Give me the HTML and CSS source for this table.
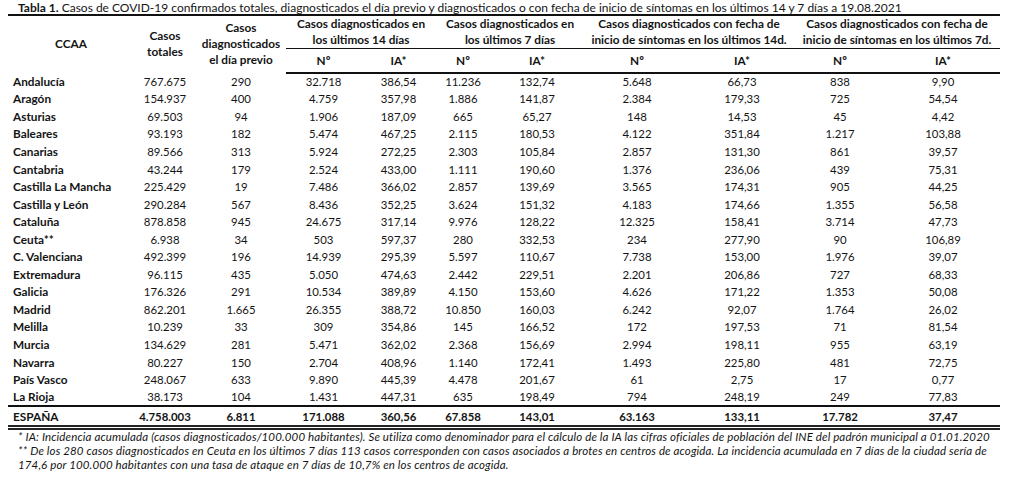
FILE: index.html
```html
<!DOCTYPE html>
<html lang="es">
<head>
<meta charset="utf-8">
<title>Tabla 1. Casos de COVID-19</title>
<link rel="stylesheet" href="styles.css">
</head>
<body>
<div class="page">
  <p class="caption"><b>Tabla 1.</b> Casos de COVID-19 confirmados totales, diagnosticados el día previo y diagnosticados o con fecha de inicio de síntomas en los últimos 14 y 7 días a 19.08.2021</p>
  <table class="data">
    <colgroup>
      <col class="c-ccaa"><col class="c-tot"><col class="c-prev">
      <col class="c-n14"><col class="c-ia14">
      <col class="c-n7"><col class="c-ia7">
      <col class="c-ns14"><col class="c-ias14">
      <col class="c-ns7"><col class="c-ias7">
    </colgroup>
    <thead>
      <tr class="grp-row">
        <th rowspan="2">CCAA</th>
        <th rowspan="2">Casos<br>totales</th>
        <th rowspan="2" class="stack">Casos<br>diagnosticados<br>el día previo</th>
        <th colspan="2" class="grp">Casos diagnosticados en<br>los últimos 14 días</th>
        <th colspan="2" class="grp">Casos diagnosticados en<br>los últimos 7 días</th>
        <th colspan="2" class="grp">Casos diagnosticados con fecha de<br>inicio de síntomas en los últimos 14d.</th>
        <th colspan="2" class="grp">Casos diagnosticados con fecha de<br>inicio de síntomas en los últimos 7d.</th>
      </tr>
      <tr class="sub-row">
        <th>Nº</th><th>IA*</th><th>Nº</th><th>IA*</th><th>Nº</th><th>IA*</th><th>Nº</th><th>IA*</th>
      </tr>
    </thead>
    <tbody>
      <tr><th>Andalucía</th><td>767.675</td><td>290</td><td>32.718</td><td>386,54</td><td>11.236</td><td>132,74</td><td>5.648</td><td>66,73</td><td>838</td><td>9,90</td></tr>
      <tr><th>Aragón</th><td>154.937</td><td>400</td><td>4.759</td><td>357,98</td><td>1.886</td><td>141,87</td><td>2.384</td><td>179,33</td><td>725</td><td>54,54</td></tr>
      <tr><th>Asturias</th><td>69.503</td><td>94</td><td>1.906</td><td>187,09</td><td>665</td><td>65,27</td><td>148</td><td>14,53</td><td>45</td><td>4,42</td></tr>
      <tr><th>Baleares</th><td>93.193</td><td>182</td><td>5.474</td><td>467,25</td><td>2.115</td><td>180,53</td><td>4.122</td><td>351,84</td><td>1.217</td><td>103,88</td></tr>
      <tr><th>Canarias</th><td>89.566</td><td>313</td><td>5.924</td><td>272,25</td><td>2.303</td><td>105,84</td><td>2.857</td><td>131,30</td><td>861</td><td>39,57</td></tr>
      <tr><th>Cantabria</th><td>43.244</td><td>179</td><td>2.524</td><td>433,00</td><td>1.111</td><td>190,60</td><td>1.376</td><td>236,06</td><td>439</td><td>75,31</td></tr>
      <tr><th>Castilla La Mancha</th><td>225.429</td><td>19</td><td>7.486</td><td>366,02</td><td>2.857</td><td>139,69</td><td>3.565</td><td>174,31</td><td>905</td><td>44,25</td></tr>
      <tr><th>Castilla y León</th><td>290.284</td><td>567</td><td>8.436</td><td>352,25</td><td>3.624</td><td>151,32</td><td>4.183</td><td>174,66</td><td>1.355</td><td>56,58</td></tr>
      <tr><th>Cataluña</th><td>878.858</td><td>945</td><td>24.675</td><td>317,14</td><td>9.976</td><td>128,22</td><td>12.325</td><td>158,41</td><td>3.714</td><td>47,73</td></tr>
      <tr><th>Ceuta**</th><td>6.938</td><td>34</td><td>503</td><td>597,37</td><td>280</td><td>332,53</td><td>234</td><td>277,90</td><td>90</td><td>106,89</td></tr>
      <tr><th>C. Valenciana</th><td>492.399</td><td>196</td><td>14.939</td><td>295,39</td><td>5.597</td><td>110,67</td><td>7.738</td><td>153,00</td><td>1.976</td><td>39,07</td></tr>
      <tr><th>Extremadura</th><td>96.115</td><td>435</td><td>5.050</td><td>474,63</td><td>2.442</td><td>229,51</td><td>2.201</td><td>206,86</td><td>727</td><td>68,33</td></tr>
      <tr><th>Galicia</th><td>176.326</td><td>291</td><td>10.534</td><td>389,89</td><td>4.150</td><td>153,60</td><td>4.626</td><td>171,22</td><td>1.353</td><td>50,08</td></tr>
      <tr><th>Madrid</th><td>862.201</td><td>1.665</td><td>26.355</td><td>388,72</td><td>10.850</td><td>160,03</td><td>6.242</td><td>92,07</td><td>1.764</td><td>26,02</td></tr>
      <tr><th>Melilla</th><td>10.239</td><td>33</td><td>309</td><td>354,86</td><td>145</td><td>166,52</td><td>172</td><td>197,53</td><td>71</td><td>81,54</td></tr>
      <tr><th>Murcia</th><td>134.629</td><td>281</td><td>5.471</td><td>362,02</td><td>2.368</td><td>156,69</td><td>2.994</td><td>198,11</td><td>955</td><td>63,19</td></tr>
      <tr><th>Navarra</th><td>80.227</td><td>150</td><td>2.704</td><td>408,96</td><td>1.140</td><td>172,41</td><td>1.493</td><td>225,80</td><td>481</td><td>72,75</td></tr>
      <tr><th>País Vasco</th><td>248.067</td><td>633</td><td>9.890</td><td>445,39</td><td>4.478</td><td>201,67</td><td>61</td><td>2,75</td><td>17</td><td>0,77</td></tr>
      <tr><th>La Rioja</th><td>38.173</td><td>104</td><td>1.431</td><td>447,31</td><td>635</td><td>198,49</td><td>794</td><td>248,19</td><td>249</td><td>77,83</td></tr>
    </tbody>
    <tfoot>
      <tr><th>ESPAÑA</th><td>4.758.003</td><td>6.811</td><td>171.088</td><td>360,56</td><td>67.858</td><td>143,01</td><td>63.163</td><td>133,11</td><td>17.782</td><td>37,47</td></tr>
    </tfoot>
  </table>
  <div class="notes">
    <p>* IA: Incidencia acumulada (casos diagnosticados/100.000 habitantes). Se utiliza como denominador para el cálculo de la IA las cifras oficiales de población del INE del padrón municipal a 01.01.2020</p>
    <p>** De los 280 casos diagnosticados en Ceuta en los últimos 7 días 113 casos corresponden con casos asociados a brotes en centros de acogida. La incidencia acumulada en 7 días de la ciudad sería de<br>174,6 por 100.000 habitantes con una tasa de ataque en 7 días de 10,7% en los centros de acogida.</p>
  </div>
</div>
</body>
</html>
```

FILE: styles.css
```css
html, body {
  margin: 0;
  padding: 0;
  background: #ffffff;
}

body {
  font-family: Lato, "Open Sans", "Liberation Sans", sans-serif;
  color: #141414;
}

.page {
  width: 992px;
  margin-left: 8px;
}

.caption {
  margin: 0;
  height: 14px;
  padding-left: 10px;
  font-size: 12px;
  line-height: 15px;
  border-bottom: 2px solid #111;
  white-space: nowrap;
}

.caption b {
  font-weight: 700;
}

.data {
  width: 992px;
  border-collapse: collapse;
  table-layout: fixed;
  font-size: 11.4px;
}

.c-ccaa { width: 126px; }
.c-tot { width: 62px; }
.c-prev { width: 90px; }
.c-n14 { width: 75px; }
.c-ia14 { width: 75px; }
.c-n7 { width: 54px; }
.c-ia7 { width: 94px; }
.c-ns14 { width: 106px; }
.c-ias14 { width: 104px; }
.c-ns7 { width: 92px; }
.c-ias7 { width: 114px; }

.data th,
.data td {
  padding: 0;
  text-align: center;
  white-space: nowrap;
}

.data thead th {
  font-weight: 700;
  font-size: 11.8px;
  line-height: 16px;
  vertical-align: middle;
}

.grp-row {
  height: 31px;
}

.grp-row .grp {
  border-bottom: 1.5px solid #111;
}

.sub-row {
  height: 24px;
}

.sub-row th {
  padding-top: 2px;
  border-bottom: 2px solid #111;
}

.data tbody tr {
  height: 17.55px;
}

.data tbody th,
.data tfoot th {
  text-align: left;
  padding-left: 5px;
  font-weight: 700;
  font-size: 11.8px;
}

.data tbody td {
  font-weight: 400;
}

.data tfoot tr {
  height: 22px;
  border-top: 2px solid #111;
  border-bottom: 5px double #222;
}

.data tfoot td {
  font-weight: 700;
}

.notes {
  padding-left: 10px;
  padding-top: 0;
  font-style: italic;
  font-size: 11.5px;
  line-height: 14px;
  letter-spacing: 0.13px;
}

.notes p {
  margin: 0;
  white-space: nowrap;
}
```
